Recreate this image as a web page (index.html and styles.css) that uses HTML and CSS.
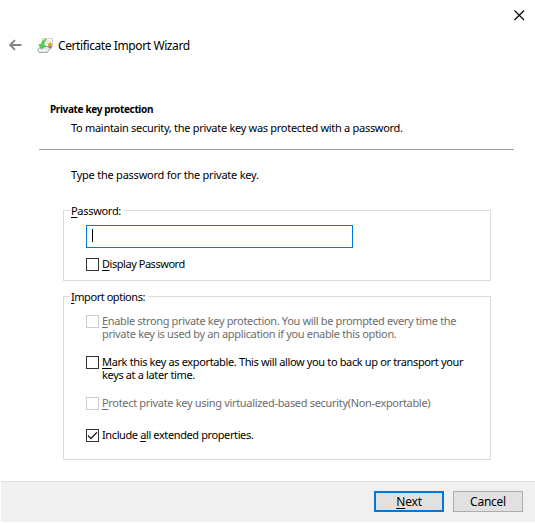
FILE: index.html
```html
<!DOCTYPE html>
<html lang="en">
<head>
<meta charset="utf-8">
<title>Certificate Import Wizard</title>
<link rel="stylesheet" href="styles.css">
</head>
<body>
<div class="window">
  <div class="titlebar">
    <svg class="close" width="11" height="11" viewBox="0 0 11 11"><path d="M.5 .5l9.500 9.500M10 .5l-9.500 9.500" fill="none" stroke="#000" stroke-width="1.15"/></svg>
  </div>
  <header class="header">
    <svg class="back" width="13" height="12" viewBox="0 0 13 12"><path d="M12.5 6H1.3M6 1.2L1.2 6L6 10.8" fill="none" stroke="#858585" stroke-width="1.9"/></svg>
    <svg class="cert" width="17" height="17" viewBox="0 0 17 17">
      <path d="M5.5 1.500h10v8h-10z" fill="#fbf9f0" stroke="#d3cfc2"/>
      <path d="M8 4h5.500M9 6h2" stroke="#ddd9cc"/>
      <path d="M11.500 8v4l1.500-1 1.500 1V8z" fill="#4b78b8"/>
      <circle cx="13" cy="7.500" r="2" fill="#f0a020"/>
      <path d="M.7 12.500l3-3h7l2.500 2-3 4H2z" fill="#dfe1e2" stroke="#92979a" stroke-width=".8"/>
      <path d="M2 13.500h7.500l2-1.800" fill="none" stroke="#fff"/>
      <path d="M9.500 2.300C6.500 2.500 4.500 4.500 4.300 7.500L1.800 7.500 4.300 12 8.800 9 6.800 8C7 5.500 7.800 4 9.500 2.300z" fill="#4bd64b" stroke="#2cab35" stroke-width=".5"/>
    </svg>
    <h1 class="title">Certificate Import Wizard</h1>
  </header>
  <main class="page">
    <h2 class="heading">Private key protection</h2>
    <p class="subtitle">To maintain security, the private key was protected with a password.</p>
    <div class="rule"></div>
    <p class="prompt">Type the password for the private key.</p>

    <section class="group group-password">
      <div class="legend legend-password"><u>P</u>assword:</div>
      <div class="field"><span class="caret"></span></div>
      <div class="option"><span class="box"></span><div class="label display"><u>D</u>isplay Password</div></div>
    </section>

    <section class="group group-import">
      <div class="legend legend-import"><u>I</u>mport options:</div>
      <div class="option disabled"><span class="box"></span><div class="label strong"><u>E</u>nable strong private key protection. You will be prompted every time the<br>private key is used by an application if you enable this option.</div></div>
      <div class="option"><span class="box"></span><div class="label exportable"><u>M</u>ark this key as exportable. This will allow you to back up or transport your<br>keys at a later time.</div></div>
      <div class="option disabled"><span class="box"></span><div class="label protect"><u>P</u>rotect private key using virtualized-based security(Non-exportable)</div></div>
      <div class="option"><span class="box"><svg width="11" height="11" viewBox="0 0 11 11"><path d="M1 5.500l3 3L10 2.300" fill="none" stroke="#222" stroke-width="1.300"/></svg></span><div class="label include">Include <u>a</u>ll extended properties.</div></div>
    </section>
  </main>
  <footer class="footer">
    <div class="button primary"><span><u>N</u>ext</span></div>
    <div class="button cancel"><span>Cancel</span></div>
  </footer>
</div>
</body>
</html>
```
FILE: styles.css
```css
* { box-sizing: border-box; margin: 0; padding: 0; }
body { background: #fff; color: #000; overflow: hidden; font: 11px/13px "Noto Sans", sans-serif; white-space: nowrap; }
u { text-decoration: underline; text-underline-offset: 2px; text-decoration-thickness: 1px; text-decoration-skip-ink: none; }
svg { display: block; flex: none; }
.window { width: 535px; height: 523px; display: flex; flex-direction: column; }
.titlebar { height: 30px; display: flex; justify-content: flex-end; padding: 10px 10px 0 0; }
.header { height: 30px; display: flex; align-items: center; padding-left: 9px; }
.cert { margin-left: 15px; }
.title { font: 12px/18px "Noto Sans", sans-serif; margin: 2px 0 0 4px; letter-spacing: -.4px; }
.page { height: 421px; padding: 43px 21px 0 39px; }
.heading { font-size: 10px; line-height: 13px; font-weight: 700; margin-left: 11px; letter-spacing: -.36px; }
.subtitle { margin: 5px 0 0 32px; letter-spacing: -.29px; }
.rule { height: 1px; background: #a0a0a0; margin-top: 15px; }
.prompt { margin: 18px 0 0 32px; letter-spacing: -.23px; }
.group { width: 428px; margin-left: 24px; border: 1px solid #dcdcdc; padding-left: 22px; }
.group-password { height: 71px; margin-top: 29px; }
.group-import { height: 164px; margin-top: 15px; }
.legend { width: max-content; height: 13px; margin: -7px 0 0 -16px; padding: 0 3px 0 1px; background: #fff; }
.legend-password { letter-spacing: -.3px; }
.legend-import { letter-spacing: -.45px; }
.field { width: 267px; height: 23px; border: 1px solid #0078d7; margin-top: 8px; padding: 3px 0 0 5px; }
.caret { display: block; width: 1px; height: 13px; background: #000; }
.option { display: flex; align-items: flex-start; gap: 3px; }
.box { width: 13px; height: 13px; flex: none; border: 1px solid #333; }
.label { margin: -1px 0 1px; }
.display { letter-spacing: -.46px; }
.strong { letter-spacing: -.345px; }
.exportable { letter-spacing: -.36px; }
.protect { letter-spacing: -.32px; }
.include { letter-spacing: -.39px; }
.group-password .option { margin-top: 10px; }
.group-import .option { margin-top: 15px; }
.group-import .legend + .option { margin-top: 12px; }
.group-import .option:last-child { margin-top: 19px; }
.disabled { color: #6d6d6d; }
.disabled .box { border-color: #ccc; }
.footer { width: 534px; height: 41px; margin-left: 1px; display: flex; justify-content: flex-end; gap: 9px; padding: 9px 12px 0 0; background: #f0f0f0; border-top: 1px solid #dfdfdf; }
.button { width: 70px; height: 21px; border: 1px solid #adadad; background: #e1e1e1; display: flex; align-items: center; justify-content: center; font-size: 12px; line-height: 17px; }
.primary { border: 2px solid #0078d7; letter-spacing: -.2px; }
.cancel { letter-spacing: -.25px; }
```
